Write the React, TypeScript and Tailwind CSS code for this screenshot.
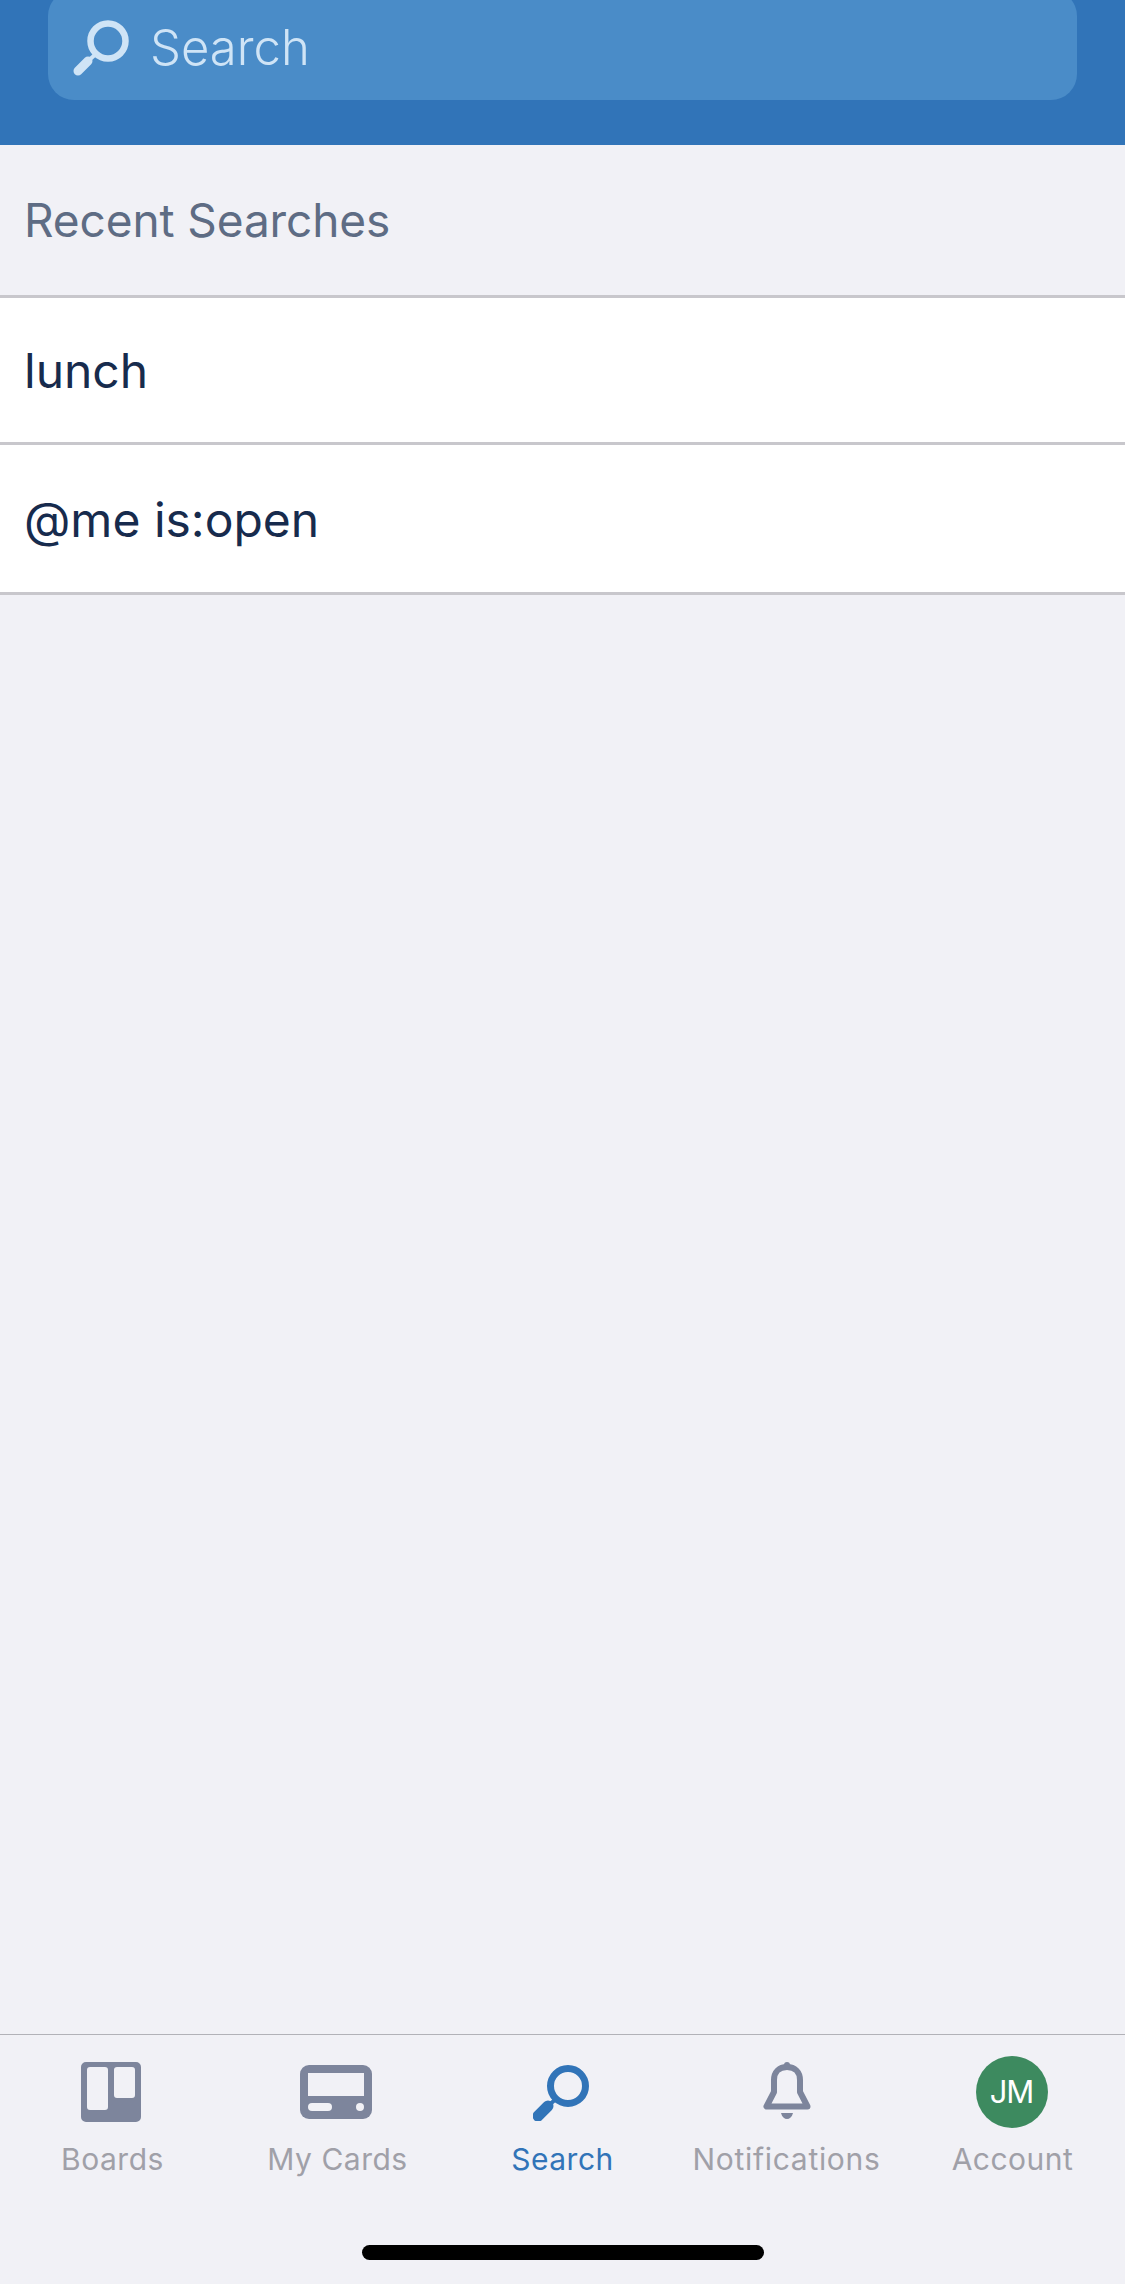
const tabText = "text-[30px] leading-[36px] tracking-[0.5px] text-[#a0a0a8]";

function SearchIcon({ className, ring = 6.5, handle = 9 }: { className: string; ring?: number; handle?: number }) {
  return (
    <svg viewBox="0 0 56 56" className={className} fill="none" stroke="currentColor">
      <circle cx="35" cy="21" r="17.5" strokeWidth={ring} />
      <path d="M24 33 L15 41" strokeWidth="4" />
      <path d="M15 41 L5 51" strokeWidth={handle} strokeLinecap="round" />
    </svg>
  );
}

function BoardsIcon() {
  return (
    <svg viewBox="0 0 60 60" className="-ml-[3px] h-[60px] w-[60px]">
      <path
        fillRule="evenodd"
        fill="#7d859c"
        d="M5 0H55A5 5 0 0 1 60 5V55A5 5 0 0 1 55 60H5A5 5 0 0 1 0 55V5A5 5 0 0 1 5 0Z M9 5A3 3 0 0 0 6 8V45A3 3 0 0 0 9 48H24A3 3 0 0 0 27 45V8A3 3 0 0 0 24 5Z M36 5A3 3 0 0 0 33 8V33A3 3 0 0 0 36 36H51A3 3 0 0 0 54 33V8A3 3 0 0 0 51 5Z"
      />
    </svg>
  );
}

function CardsIcon() {
  return (
    <svg viewBox="0 0 72 54" className="-ml-[3px] h-[54px] w-[72px]">
      <rect width="72" height="54" rx="9" fill="#7d859c" />
      <rect x="8" y="8" width="56" height="23" fill="#f1f1f6" />
      <rect x="8" y="38" width="24" height="8" rx="4" fill="#f1f1f6" />
      <circle cx="60" cy="42" r="4" fill="#f1f1f6" />
    </svg>
  );
}

function BellIcon() {
  return (
    <svg viewBox="0 0 48 57" className="-ml-[2px] h-[57px] w-[48px]" fill="#7d859c">
      <circle cx="24" cy="3" r="3" />
      <path
        d="M3.5 44.5H44.5L37 30V18C37 10 32 5 24 5C16 5 11 10 11 18V30Z"
        fill="none"
        stroke="#7d859c"
        strokeWidth="6"
        strokeLinejoin="round"
      />
      <path d="M18 51H30C29 55 26.5 57 24 57C21.5 57 19 55 18 51Z" />
    </svg>
  );
}

export default function App() {
  return (
    <div className="flex h-[2284px] w-full flex-col overflow-hidden bg-[#f1f1f6] font-['Inter',sans-serif]">
      <header className="h-[145px] shrink-0 bg-[#3174b8] px-[48px]">
        <div className="-mt-[10px] flex h-[110px] items-center gap-[21px] rounded-[26px] bg-[#4a8cc8] pl-[25px] pt-[5px]">
          <SearchIcon className="h-[56px] w-[56px] text-[#cfe4f6]" />
          <span className="text-[49px] font-light leading-none text-[#cfe4f6]">Search</span>
        </div>
      </header>

      <main className="flex-1">
        <div className="flex h-[153px] items-center border-b-[3px] border-[#c8c7cc] pl-[24px]">
          <h2 className="text-[46px] font-normal leading-none tracking-[-0.1px] text-[#5e6c84]">Recent Searches</h2>
        </div>
        <ul>
          <li className="flex h-[147px] items-center border-b-[3px] border-[#c8c7cc] bg-white pl-[24px] pt-[2px] text-[48px] leading-none text-[#172b4d]">
            lunch
          </li>
          <li className="flex h-[150px] items-center border-b-[3px] border-[#c8c7cc] bg-white pl-[24px] pt-[2px] text-[48px] leading-none text-[#172b4d]">
            @me is:open
          </li>
        </ul>
      </main>

      <nav className="h-[250px] shrink-0 border-t border-[#b2b2b8]">
        <div className="grid grid-cols-5">
          <div className="flex flex-col items-center pt-[27px]">
            <BoardsIcon />
            <span className={`mt-[19px] ${tabText}`}>Boards</span>
          </div>
          <div className="flex flex-col items-center pt-[30px]">
            <CardsIcon />
            <span className={`mt-[22px] ${tabText}`}>My Cards</span>
          </div>
          <div className="flex flex-col items-center pt-[30px]">
            <SearchIcon className="-ml-[4px] h-[56px] w-[56px] text-[#3174b8]" ring={7} handle={11} />
            <span className="mt-[20px] text-[30px] leading-[36px] tracking-[0.5px] text-[#3174b8]">Search</span>
          </div>
          <div className="flex flex-col items-center pt-[27px]">
            <BellIcon />
            <span className={`-ml-[2px] mt-[22px] ${tabText} tracking-[0.7px]`}>Notifications</span>
          </div>
          <div className="flex flex-col items-center pt-[21px]">
            <div className="-ml-[2px] flex h-[72px] w-[72px] items-center justify-center rounded-full bg-[#3d8a5f] text-[31px] tracking-[-1px] text-white">
              JM
            </div>
            <span className={`mt-[13px] ${tabText}`}>Account</span>
          </div>
        </div>
        <div className="mx-auto mt-[68px] h-[15px] w-[402px] rounded-full bg-black" />
      </nav>
    </div>
  );
}
